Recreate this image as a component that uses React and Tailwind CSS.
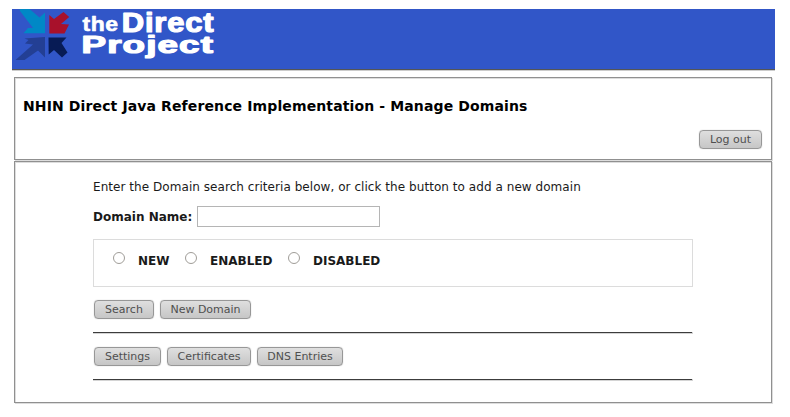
const Btn = ({ children, className }) => (
  <button
    className={`box-border h-[19px] rounded-[4px] border border-[#979797] bg-linear-to-b from-[#dfdfdf] to-[#c6c6c6] text-[11px] leading-[17px] text-[#4f4f4f] shadow-[0_0_1px_#aaa] ${className}`}
  >
    {children}
  </button>
);

const Radio = ({ label, className }) => (
  <label className={`flex items-start ${className}`}>
    <span className="h-3 w-3 rounded-full border border-[#a09d98] bg-white" />
    <span className="ml-[13px] mt-[2px] leading-[15px]">{label}</span>
  </label>
);

const Rule = () => (
  <div className="h-[2px] w-[600px] bg-[#d4d4d4]">
    <div className="h-px w-[599px] bg-[#3c3c3c]" />
  </div>
);

const Logo = () => (
  <svg width="210" height="60" viewBox="12 9 210 60" className="block">
    <path fill="#0088c6" d="M19.500 9H29.500L39.500 17.500L45 12.500V33.300H23.500L28 28H33L20 11z" />
    <path fill="#a8112b" d="M49.300 33.500V15L54 19L63.500 12L69.200 17L61 24L69 24.500L64.500 33.500z" />
    <path fill="#233f94" d="M24.500 38.500L45 37V57.500L38 50.500L24.500 60H15.500L33 44.500L25 43.500L28.500 40z" />
    <path fill="#071b55" d="M48.500 37.500H66.500L61.500 43L67.500 52.500L62 57.500L54 50L48.700 54.500z" />
    <g fill="#fff" stroke="#fff" strokeLinejoin="round" fontFamily="Liberation Sans, Arial, sans-serif" fontWeight="700">
      <text x="82.500" y="30.700" fontSize="20.500" strokeWidth=".6" letterSpacing=".5" textLength="36" lengthAdjust="spacingAndGlyphs">the</text>
      <text x="121.800" y="31.500" fontSize="27.500" strokeWidth="1.200" letterSpacing=".7" textLength="92.500" lengthAdjust="spacingAndGlyphs">Direct</text>
      <text x="81.500" y="52.700" fontSize="23.500" strokeWidth="1.200" letterSpacing=".7" textLength="132.500" lengthAdjust="spacingAndGlyphs">Project</text>
    </g>
  </svg>
);

export default function App() {
  return (
    <div className="h-[417px] w-[790px] overflow-hidden bg-white pt-[9px] font-['DejaVu_Sans',sans-serif] text-[12px] text-[#1a1a1a]">
      <header className="ml-3 h-[62px] w-[763px] border-b border-[#ccc] bg-[#3156c8]">
        <div className="h-[61px] border-b border-[#555]">
          <Logo />
        </div>
      </header>
      <section className="ml-[14px] mt-[6px] flex h-[83px] w-[758px] flex-col border border-[#909090] shadow-[1px_1px_0_#ddd,inset_1px_1px_0_#ddd]">
        <h1 className="ml-2 mt-[19px] text-[14px] leading-[18px] font-bold tracking-[0.122px] text-black">
          NHIN Direct Java Reference Implementation - Manage Domains
        </h1>
        <Btn className="mt-[15px] mr-[9px] w-[63px] self-end">Log out</Btn>
      </section>
      <main className="ml-[14px] mt-[1px] h-[242px] w-[758px] border border-[#909090] pl-[78px] shadow-[1px_1px_0_#ddd,inset_1px_1px_0_#ddd]">
        <p className="pt-[18px] leading-[15px] tracking-[0.052px]">
          Enter the Domain search criteria below, or click the button to add a new domain
        </p>
        <div className="mt-[11px] flex h-[21px] items-center font-bold">
          <label className="w-[104px]">Domain Name:</label>
          <input className="h-[21px] w-[183px] border border-[#b5b5b5] bg-white" />
        </div>
        <div className="mt-3 flex h-[48px] w-[600px] border border-[#dcdcdc] pl-[19px] pt-3 font-bold">
          <Radio label="NEW" className="w-[72px]" />
          <Radio label="ENABLED" className="w-[103px]" />
          <Radio label="DISABLED" className="" />
        </div>
        <div className="mt-[13px] mb-[13px] ml-[1px] flex gap-[6px]">
          <Btn className="w-[60px]">Search</Btn>
          <Btn className="w-[91px]">New Domain</Btn>
        </div>
        <Rule />
        <div className="mt-[13px] mb-[13px] ml-[1px] flex gap-[6px]">
          <Btn className="w-[67px]">Settings</Btn>
          <Btn className="w-[84px]">Certificates</Btn>
          <Btn className="w-[86px]">DNS Entries</Btn>
        </div>
        <Rule />
      </main>
    </div>
  );
}
